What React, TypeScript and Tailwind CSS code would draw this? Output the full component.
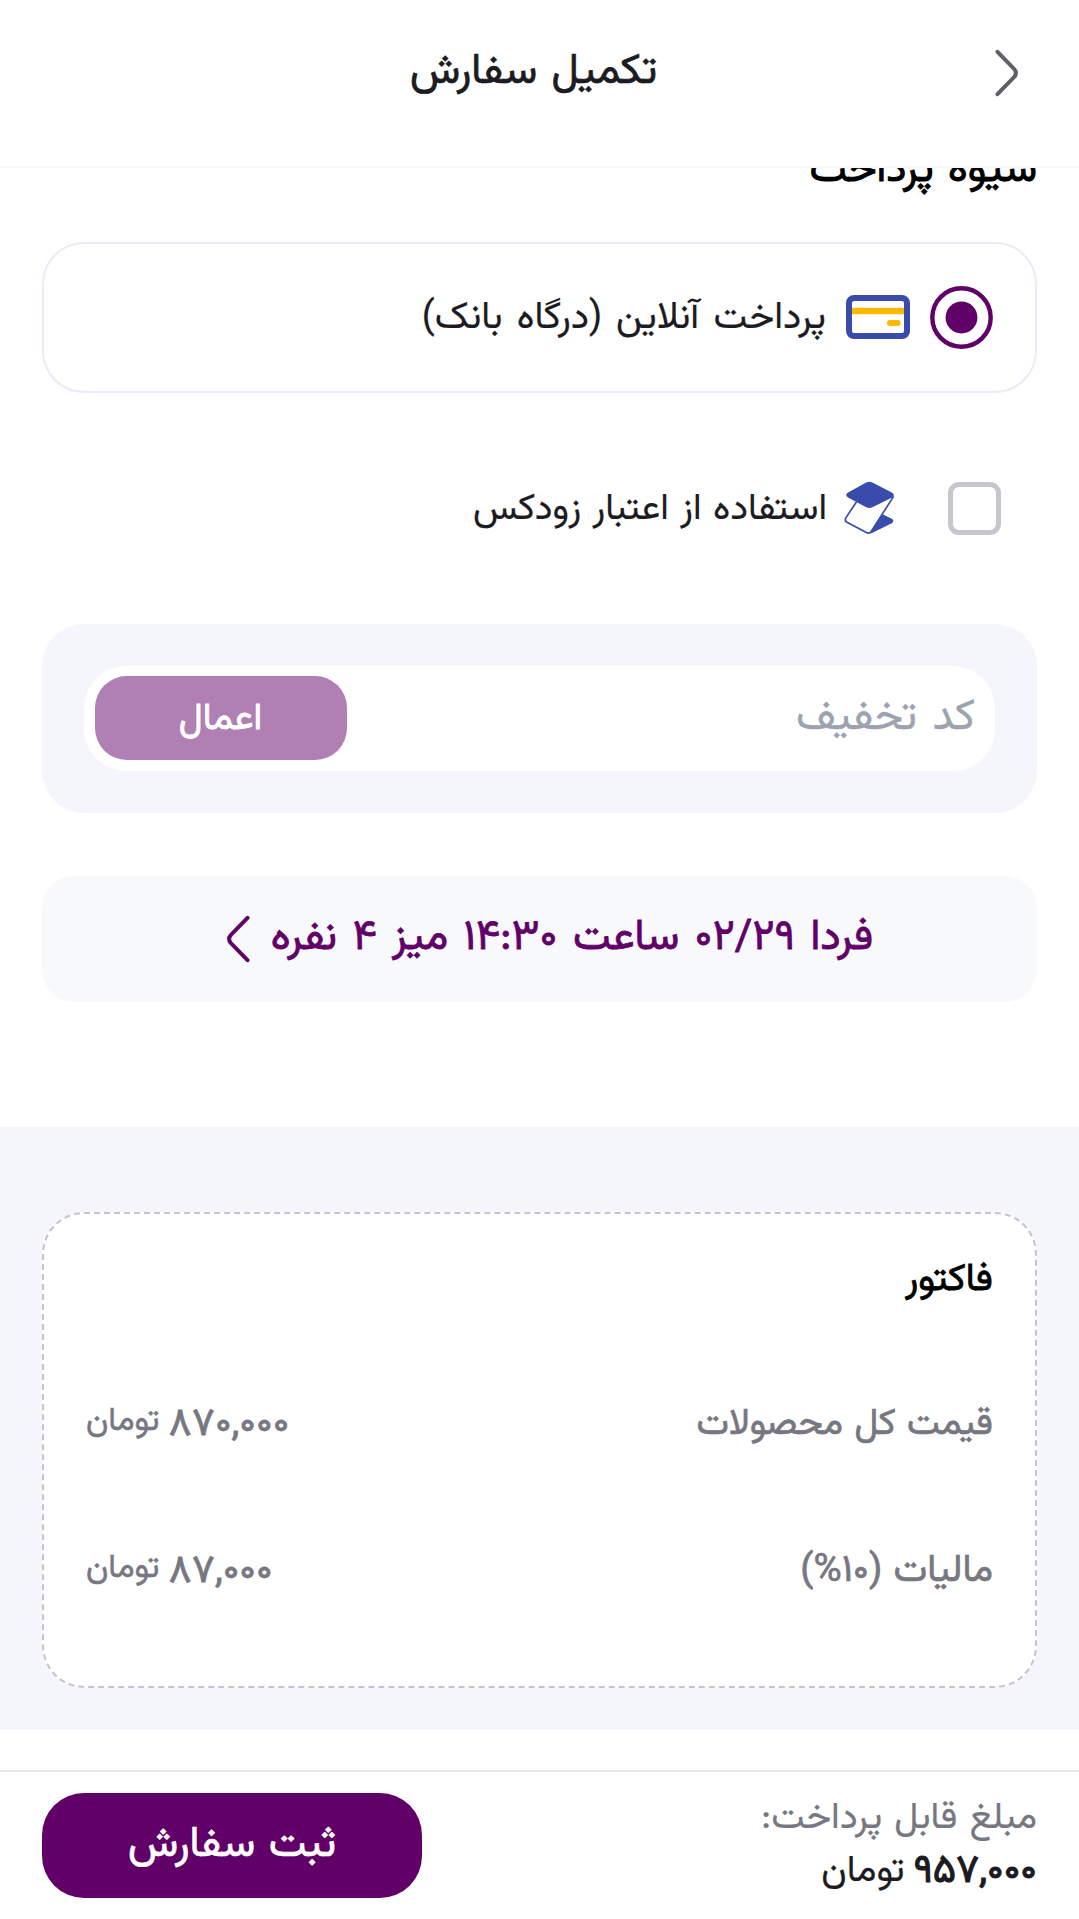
import type { ReactNode } from "react";

function Chevron({ className }: { className: string }) {
  return (
    <svg viewBox="0 0 24 48" fill="none" stroke="currentColor" strokeWidth="4" strokeLinecap="round" className={className}>
      <path d="M2.5 2.8 19.4 20.2Q22.4 24 19.4 27.8L2.5 45.2" />
    </svg>
  );
}

function BankCardIcon() {
  return (
    <svg viewBox="0 0 64 44" className="h-[44px] w-[64px] shrink-0">
      <rect x="3" y="3" width="58" height="38" rx="5" fill="#fff" stroke="#3a4cab" strokeWidth="6" />
      <rect x="6" y="12.8" width="52" height="6.4" fill="#ffb800" />
      <rect x="41" y="25" width="13.6" height="6" rx="3" fill="#ffb800" />
    </svg>
  );
}

function CreditIcon() {
  return (
    <svg viewBox="0 0 54 54" className="h-[54px] w-[54px] shrink-0">
      <path
        d="M23.2 1.6Q26.3 0 29.4 1.6L49.2 11.8Q52.6 14.2 49.2 16.6L29.4 26.2Q26.3 27.8 23.2 26.2L5 16.4Q1.4 14 5 11.4Z"
        fill="#3a4cab"
      />
      <path d="M13.4 21 3 36.6Q1.2 39.6 4 41.2L23.4 51.6Q26.4 53 28.2 50.4L50.6 15.4" fill="none" stroke="#3a4cab" strokeWidth="1.7" />
      <path d="M39.6 33.2 48.8 37.8Q52 40 48.8 42.2L29 52Q27.6 52.6 26.6 52.4Z" fill="#3a4cab" />
    </svg>
  );
}

function RadioOn() {
  return (
    <svg viewBox="0 0 63 63" className="-mt-px h-[63px] w-[63px] shrink-0">
      <circle cx="31.5" cy="31.5" r="29.2" fill="none" stroke="#620069" strokeWidth="4.4" />
      <circle cx="31.5" cy="31.5" r="15.9" fill="#620069" />
    </svg>
  );
}

function InvoiceRow({ label, amount, labelClass }: { label: ReactNode; amount: string; labelClass: string }) {
  return (
    <div className="flex h-[60px] items-center justify-between leading-[60px] text-[#777782]">
      <span className={labelClass}>{label}</span>
      <span className="flex items-center gap-[9px]">
        <span className="text-[39.5px] [-webkit-text-stroke:0.8px]">{amount}</span>
        <span className="-mt-[6px] text-[33px] [-webkit-text-stroke:0.5px]">تومان</span>
      </span>
    </div>
  );
}

export default function App() {
  return (
    <div dir="rtl" className="flex h-[1919px] w-[1079px] flex-col overflow-hidden bg-white font-['Vazirmatn','Noto_Sans',sans-serif] text-[#1c1b22]">
      <header className="relative z-10 flex h-[168px] shrink-0 items-center border-b-2 border-[#f8f8fa] bg-white pr-[60px] pb-[20px] pl-[72px]">
        <Chevron className="h-[48px] w-[24px] shrink-0 text-[#5f5f66]" />
        <h1 className="flex-1 text-center text-[42.5px] leading-[66px] font-normal [word-spacing:3px] [-webkit-text-stroke:0.7px]">تکمیل سفارش</h1>
      </header>

      <main className="shrink-0">
        <div className="px-[42px]">
          <h2 className="-mt-[30px] text-[42px] leading-[66px] font-normal text-black [word-spacing:3px] [-webkit-text-stroke:0.9px]">شیوه پرداخت</h2>

          <div className="mt-[38px] flex h-[151px] items-center rounded-[42px] border-2 border-[#e9ebf6] pr-[42px]">
            <RadioOn />
            <span className="-mt-px mr-[20px]">
              <BankCardIcon />
            </span>
            <span className="mt-[2px] mr-[20px] text-[38px] leading-[60px] [word-spacing:4px] [-webkit-text-stroke:0.2px]">پرداخت آنلاین (درگاه بانک)</span>
          </div>

          <div className="mt-[89px] flex h-[53px] items-center pr-[36px]">
            <span className="h-[53px] w-[53px] shrink-0 rounded-[11px] border-[5px] border-[#c8c6cc]" />
            <span className="-mt-[2px] mr-[51px]">
              <CreditIcon />
            </span>
            <span className="mt-[3px] mr-[16px] text-[37px] leading-[60px] [word-spacing:1.5px] [-webkit-text-stroke:0.2px]">استفاده از اعتبار زودکس</span>
          </div>

          <div className="mt-[89px] h-[189px] rounded-[42px] bg-[#f5f6fc] p-[42px]">
            <div className="flex h-[105px] items-center justify-between rounded-[42px] bg-white pr-[20px] pl-[10.5px]">
              <span className="-mt-[2px] text-[43.5px] leading-[66px] text-[#9ca3af] [word-spacing:4px] [-webkit-text-stroke:0.3px]">کد تخفیف</span>
              <button className="-mt-px flex h-[84px] w-[252px] items-center justify-center rounded-[32px] bg-[#b07fb3] pt-[3px] text-[37.5px] leading-[60px] text-white [-webkit-text-stroke:0.8px]">
                اعمال
              </button>
            </div>
          </div>

          <div className="mt-[63px] flex h-[126px] items-center justify-center rounded-[32px] bg-[#f8f9fb] text-[#620069]">
            <span className="-mt-px text-[42.5px] leading-[66px] [word-spacing:4px] [-webkit-text-stroke:0.8px]">فردا ۰۲/۲۹ ساعت ۱۴:۳۰ میز ۴ نفره</span>
            <span className="-mt-px flex w-[65px] justify-center">
              <Chevron className="h-[48px] w-[24px] rotate-180" />
            </span>
          </div>
        </div>

        <section className="mt-[125px] bg-[#f5f6fc] px-[42px] pt-[85px] pb-[42px]">
          <div className="h-[476px] rounded-[42px] border-2 border-dashed border-[#c5c3cf] bg-white px-[42px] pt-[37px]">
            <h3 className="text-[38px] leading-[60px] font-normal text-black [-webkit-text-stroke:0.8px]">فاکتور</h3>
            <div className="mt-[84px] flex flex-col gap-[87px]">
              <InvoiceRow label="قیمت کل محصولات" amount="۸۷۰,۰۰۰" labelClass="text-[37px] [word-spacing:1.5px] [-webkit-text-stroke:0.7px]" />
              <InvoiceRow label="مالیات (۱۰%)" amount="۸۷,۰۰۰" labelClass="text-[38.5px] [word-spacing:1px] [-webkit-text-stroke:0.7px]" />
            </div>
          </div>
        </section>
      </main>

      <footer className="mt-auto flex h-[149px] shrink-0 items-start justify-between border-t-2 border-[#e8e8ee] bg-white px-[42px] pt-[21px]">
        <div className="flex flex-col">
          <span className="text-[37.5px] leading-[53px] text-[#777782] [word-spacing:2px] [-webkit-text-stroke:0.2px]">مبلغ قابل پرداخت:</span>
          <span className="flex items-center gap-[9px] leading-[53px]">
            <span className="text-[39.5px] [-webkit-text-stroke:1.2px]">۹۵۷,۰۰۰</span>
            <span className="text-[37.5px] [-webkit-text-stroke:0.2px]">تومان</span>
          </span>
        </div>
        <button className="flex h-[105px] w-[380px] items-center justify-center rounded-[42px] bg-[#620069] text-[42.5px] leading-[66px] text-white [word-spacing:2px] [-webkit-text-stroke:0.7px]">
          ثبت سفارش
        </button>
      </footer>
    </div>
  );
}
